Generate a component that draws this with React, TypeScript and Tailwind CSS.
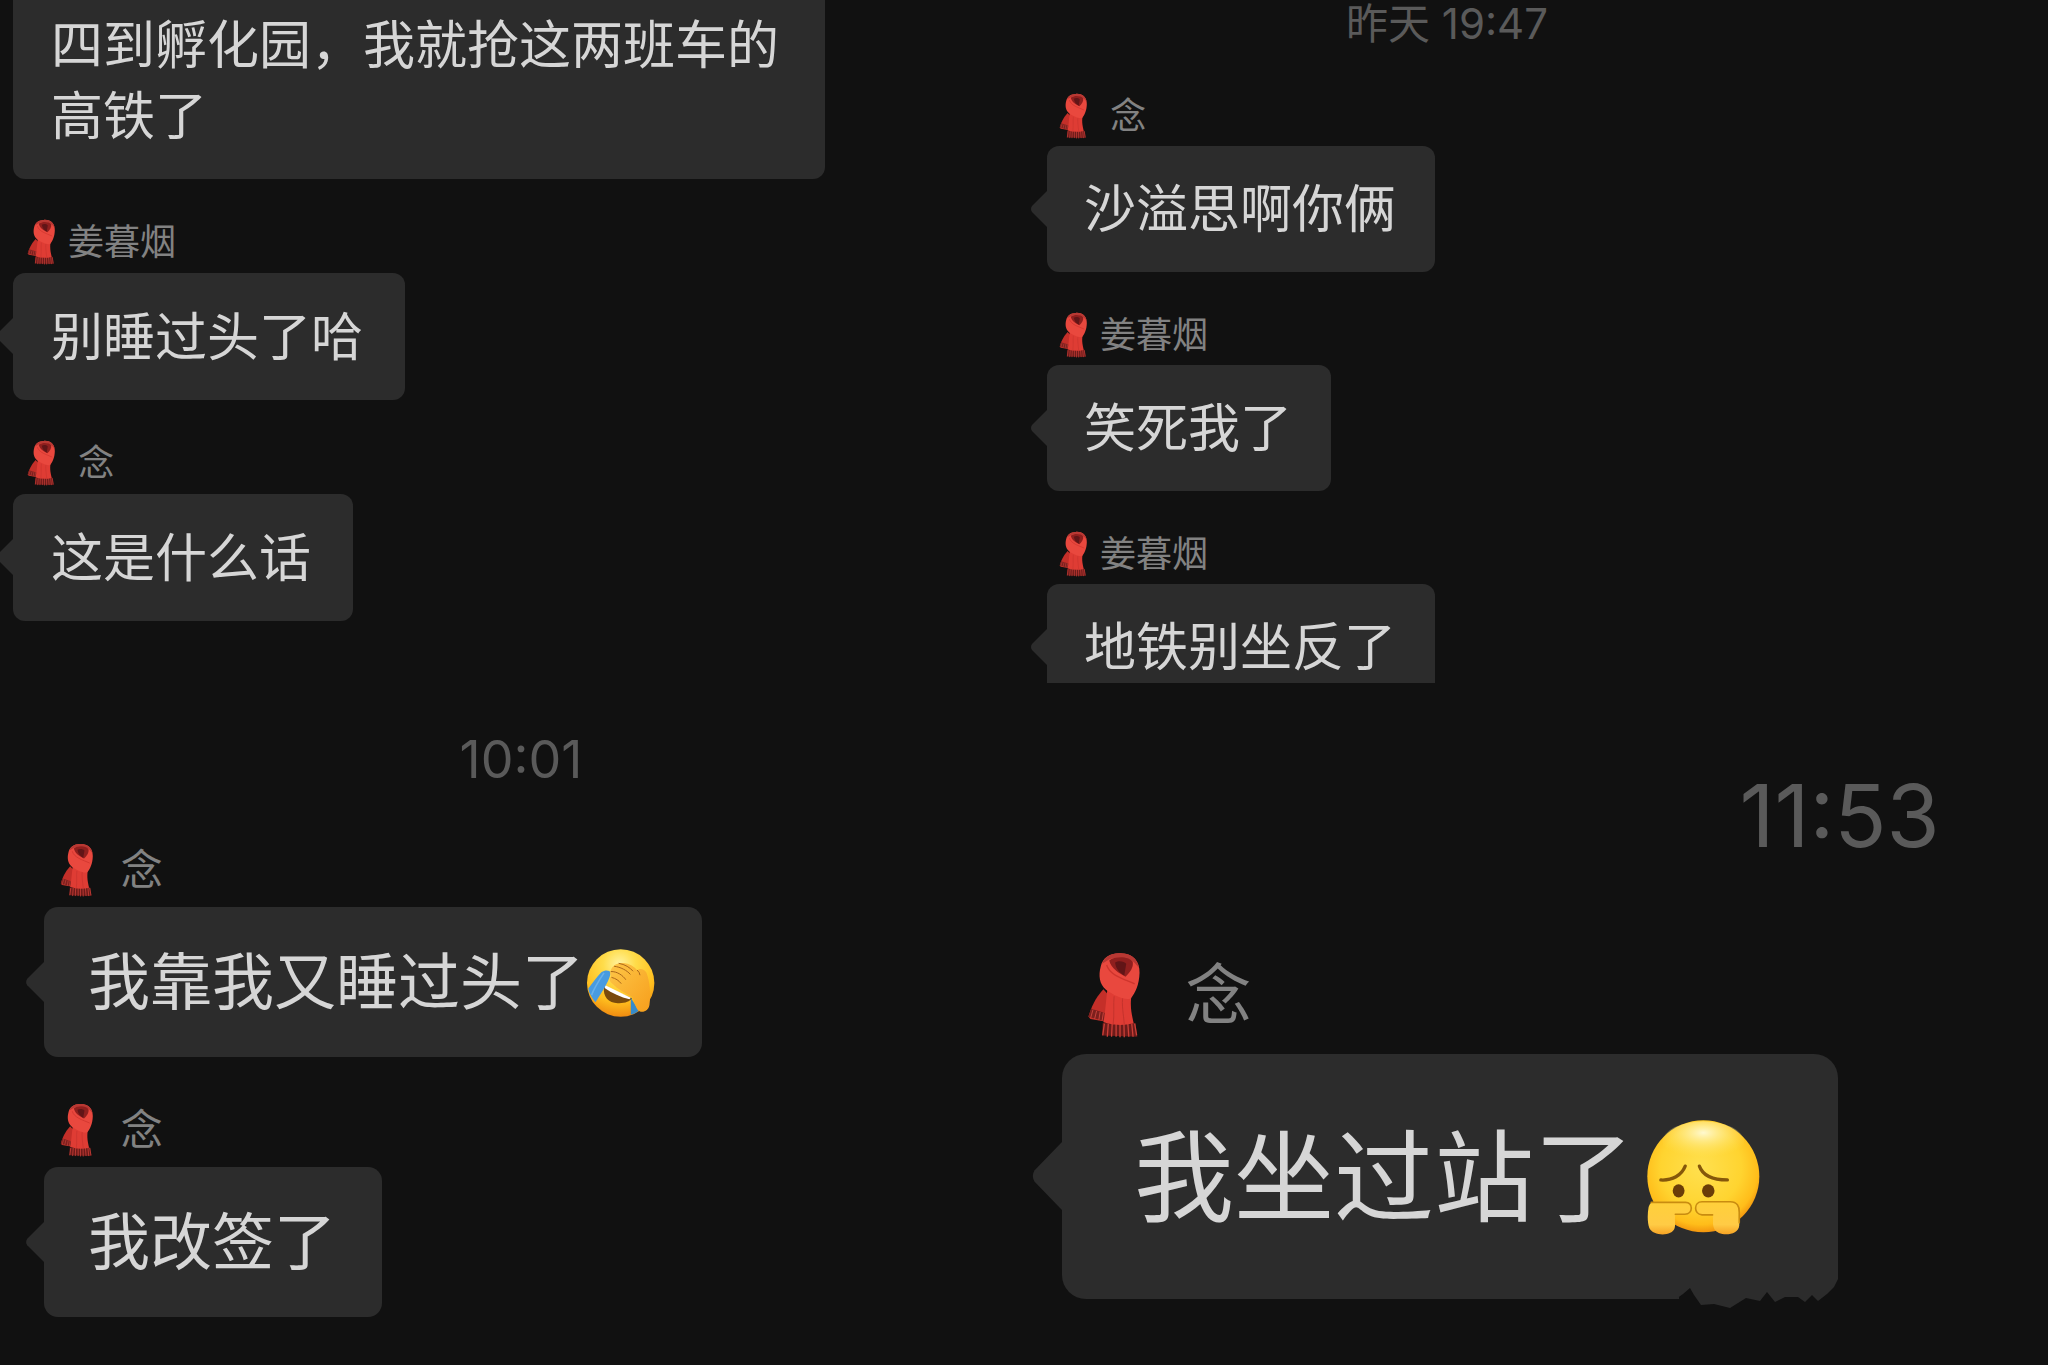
import { ReactNode } from "react";
import clsx from "clsx";

type Size = {
  tail: string;
  bubble: string;
  radius: string;
  header: string;
  scarf: string;
  name: string;
  emoji: string;
};

const small: Size = {
  tail: "w-[17px] h-9 mt-[45px]",
  bubble: "pl-[37px] pr-[39px] pt-[29px] pb-[27px] text-[52px] leading-[70px]",
  radius: "rounded-xl",
  header: "pt-10 pb-[7px] pl-[29px] gap-[13px]",
  scarf: "w-7 h-[46px]",
  name: "text-[36px] leading-[46px]",
  emoji: "size-14",
};

const smallWide: Size = {
  ...small,
  bubble: "pl-[38px] pr-[42px] pt-[29px] pb-[27px] text-[52px] leading-[71px]",
  header: "pt-10 pb-2 pl-[31px] gap-[13px]",
};

const medium: Size = {
  tail: "w-[19px] h-10 mt-[55px]",
  bubble: "pl-11 pr-[46px] pt-[37px] pb-[35px] text-[62px] leading-[78px]",
  radius: "rounded-[14px]",
  header: "pt-[46px] pb-[10px] pl-[35px] gap-4",
  scarf: "w-[33px] h-[54px]",
  name: "text-[42px] leading-[54px]",
  emoji: "size-[70px]",
};

const large: Size = {
  tail: "w-[31px] h-[68px] mt-[88px]",
  bubble: "pl-[72px] pr-[78px] pt-[61px] pb-[59px] text-[100px] leading-[125px]",
  radius: "rounded-[24px]",
  header: "pt-[86px] pb-4 pl-[56px] gap-[27px]",
  scarf: "w-[53px] h-[86px]",
  name: "text-[66px] leading-[86px]",
  emoji: "w-[114px] h-[117px]",
};

const Scarf = ({ className }: { className: string }) => (
  <svg viewBox="50 64 162 264" className={clsx("shrink-0", className)} aria-hidden="true">
    <path d="M100 178 C84 196 68 216 54 262 L60 270 L104 277 L124 205Z" fill="#c42f29" />
    <path d="M62 238 L54 263 L102 276 L108 252Z" fill="#7d1f1d" />
    <path d="M68 241l-7 25M79 245l-6 25M90 248l-4 25M100 250l-4 25" stroke="#c9443c" strokeWidth="3" />
    <path d="M98 282 H198 L204 324 L96 320Z" fill="#6d1b1a" />
    <path
      d="M103 284l-5 36M115 284l-3 40M127 284l-2 40M139 284v40M151 284v42M163 284l1 42M175 284l3 40M187 284l4 40M196 284l6 36"
      stroke="#cb3f37"
      strokeWidth="4"
    />
    <path d="M112 180 C108 212 106 250 100 280 Q145 294 193 283 C188 258 180 235 187 192Z" fill="#df3c34" />
    <path d="M133 200 C130 225 134 255 130 286M160 200 C155 225 162 255 164 286" stroke="#c4322c" strokeWidth="3" fill="none" />
    <path
      d="M148 68 C190 66 212 92 211 128 C210 165 198 190 184 207 C166 214 130 196 108 180 C88 164 84 136 92 108 C98 82 118 69 148 68Z"
      fill="#e9483e"
    />
    <path d="M148 68 C184 66 204 84 209 112 L196 98 C182 80 130 76 110 92 L96 100 C104 78 122 69 148 68Z" fill="#b83833" />
    <path d="M118 90 C135 76 178 76 190 94 C193 112 182 126 168 140 C148 128 124 116 118 90Z" fill="#8f1f1e" />
    <path d="M136 96 C146 90 164 92 170 100 L164 136 C150 128 138 116 136 96Z" fill="#611517" />
    <path d="M110 104 C120 136 160 146 196 162" stroke="#cf352d" strokeWidth="4" fill="none" />
  </svg>
);

const Facepalm = ({ className }: { className: string }) => (
  <svg viewBox="50 48 212 214" className={className} role="img" aria-label="捂脸">
    <defs>
      <radialGradient id="palmFace" cx="48%" cy="22%" r="80%">
        <stop offset="0" stopColor="#fff3a0" />
        <stop offset=".3" stopColor="#ffdc4a" />
        <stop offset=".7" stopColor="#ffbe1e" />
        <stop offset="1" stopColor="#ee8710" />
      </radialGradient>
      <linearGradient id="palmHand" x1="0" y1="0" x2="1" y2="1">
        <stop offset="0" stopColor="#fdc648" />
        <stop offset="1" stopColor="#f79f1c" />
      </linearGradient>
    </defs>
    <circle cx="155" cy="155" r="103" fill="url(#palmFace)" />
    <path d="M104 166 C100 198 118 216 146 217 C168 218 182 212 190 202Z" fill="#7a4a0c" />
    <path d="M108 162 L186 200 L182 205 C156 198 128 186 106 170Z" fill="#fff" />
    <path d="M96 122 C108 114 122 116 124 124 C124 142 100 180 78 214 C66 200 58 186 56 172 C68 156 82 136 96 122Z" fill="#489be0" />
    <path d="M104 124 C92 142 74 170 66 192" stroke="#68b0ea" strokeWidth="5" fill="none" />
    <path d="M186 200 L210 240 C203 246 196 250 186 252Z" fill="#358bcb" />
    <path
      d="M124 118 C130 100 146 93 164 94 C180 96 196 104 206 116 C214 108 228 112 234 124 C244 150 248 190 243 222 C240 238 228 245 214 242 C200 236 200 216 190 198 C170 188 146 174 128 156 C120 148 120 140 126 134 C122 128 122 122 124 118Z"
      fill="url(#palmHand)"
    />
    <path
      d="M126 120 C144 119 162 132 170 144M136 104 C154 106 174 116 184 128M150 95 C168 98 184 108 192 118M128 138 C140 141 150 148 156 156M206 116 q7 6 8 14"
      stroke="#a8651a"
      strokeWidth="3"
      fill="none"
      strokeLinecap="round"
    />
  </svg>
);

const Worried = ({ className }: { className: string }) => (
  <svg viewBox="50 55 346 355" className={className} role="img" aria-label="委屈">
    <defs>
      <radialGradient id="worryFace" cx="48%" cy="42%" r="60%">
        <stop offset="0" stopColor="#ffe04f" />
        <stop offset=".6" stopColor="#ffd430" />
        <stop offset=".85" stopColor="#ffbd1a" />
        <stop offset="1" stopColor="#ef890a" />
      </radialGradient>
      <radialGradient id="worryShine" cx="50%" cy="28%" r="60%">
        <stop offset="0" stopColor="#fffbd8" stopOpacity=".95" />
        <stop offset="1" stopColor="#ffe562" stopOpacity="0" />
      </radialGradient>
      <linearGradient id="worryHand" x1="0" y1="0" x2="0" y2="1">
        <stop offset="0" stopColor="#ffd03a" />
        <stop offset=".7" stopColor="#ffcb45" />
        <stop offset="1" stopColor="#f6a325" />
      </linearGradient>
    </defs>
    <circle cx="224" cy="229" r="170" fill="url(#worryFace)" />
    <ellipse cx="224" cy="124" rx="124" ry="62" fill="url(#worryShine)" />
    <g fill="none" stroke="#85570a" strokeWidth="10" strokeLinecap="round">
      <path d="M95 240 C130 242 158 226 169 198" />
      <path d="M212 198 C222 226 250 240 297 240" />
    </g>
    <ellipse cx="149" cy="273" rx="18" ry="20" fill="#6a3d08" />
    <ellipse cx="239" cy="273" rx="19" ry="20" fill="#6a3d08" />
    <g fill="url(#worryHand)">
      <path d="M76 306 H168 C194 306 194 344 168 344 H139 C136 362 140 376 137 386 C130 412 72 412 60 386 C54 368 54 342 58 322 C62 310 68 306 76 306Z" />
      <path d="M220 306 H306 C326 306 334 320 333 338 V378 C330 412 268 412 257 388 C250 374 256 360 252 346 H220 C194 344 194 306 220 306Z" />
    </g>
    <g fill="none" stroke="#c98c10" strokeWidth="5" strokeLinecap="round">
      <path d="M66 308 H168 C194 306 194 344 168 344 H139" />
      <path d="M252 346 H220 C194 344 194 306 220 306 H306 C326 306 334 320 333 338 V370" />
    </g>
  </svg>
);

const Timestamp = ({ className, children }: { className: string; children: ReactNode }) => (
  <time className={clsx("block whitespace-pre text-center text-[#5a5a5a]", className)}>{children}</time>
);

const Bubble = ({
  size,
  className,
  cut,
  children,
}: {
  size: Size;
  className?: string;
  cut?: "top" | "bottom";
  children: ReactNode;
}) => (
  <div className="flex items-start">
    <svg
      viewBox="0 0 17 36"
      preserveAspectRatio="none"
      className={clsx("shrink-0 text-[#2c2c2c]", size.tail, cut === "top" && "invisible")}
      aria-hidden="true"
    >
      <path d="M17 0 L2 15 Q0 18 2 21 L17 36Z" fill="currentColor" />
    </svg>
    <div
      className={clsx(
        "relative bg-[#2c2c2c] text-[#d6d6d6]",
        size.bubble,
        size.radius,
        cut === "top" && "rounded-t-none !pt-[10px]",
        cut === "bottom" && "rounded-b-none !pb-0",
        className
      )}
    >
      {children}
    </div>
  </div>
);

const Message = ({
  name,
  size,
  cut,
  children,
}: {
  name: string;
  size: Size;
  cut?: "top" | "bottom";
  children: ReactNode;
}) => (
  <article>
    <header className={clsx("flex items-center", size.header)}>
      <Scarf className={size.scarf} />
      <span className={clsx("whitespace-pre text-[#828282]", size.name)}>{name}</span>
    </header>
    <Bubble size={size} cut={cut}>
      {children}
    </Bubble>
  </article>
);

// Torn edge along the lower right corner of the last bubble
const Smudge = () => (
  <svg viewBox="0 0 180 50" className="absolute right-[-18px] bottom-[-26px] h-[50px] w-[180px]" aria-hidden="true">
    <path d="M0 24 H3 V0 H180 V50 H0Z" fill="#111" />
    <path
      d="M0 0 H162 V4 L158 12 L151 19 L142 26 L136 20 L129 27 L122 22 H109 L99 27 L91 17 L84 26 L70 23 L54 33 L38 29 L25 30 L18 20 L14 13 L7 19 L0 24Z"
      fill="#2c2c2c"
    />
  </svg>
);

export default function App() {
  return (
    <main className="grid min-h-screen grid-cols-2 content-start overflow-hidden bg-[#111] font-['Inter','Noto_Sans_CJK_SC',sans-serif]">
      <section className="-ml-1">
        <Bubble size={smallWide} cut="top" className="max-w-[812px]">
          四到孵化园，我就抢这两班车的高铁了
        </Bubble>
        <Message name="姜暮烟" size={smallWide}>
          别睡过头了哈
        </Message>
        <Message name=" 念" size={smallWide}>
          这是什么话
        </Message>
      </section>

      <section className="pl-[6px]">
        <Timestamp className="max-w-[834px] pb-[5px] text-[42px] leading-[48px]">昨天 19:47</Timestamp>
        <Message name=" 念" size={small}>
          沙溢思啊你俩
        </Message>
        <Message name="姜暮烟" size={small}>
          笑死我了
        </Message>
        <Message name="姜暮烟" size={small} cut="bottom">
          地铁别坐反了
        </Message>
      </section>

      <section className="pl-[25px] pt-[47px]">
        <Timestamp className="max-w-[992px] pb-[7px] text-[52px] leading-[60px]">10:01</Timestamp>
        <Message name=" 念" size={medium}>
          <span className="flex items-center gap-0.5">
            我靠我又睡过头了
            <Facepalm className={medium.emoji} />
          </span>
        </Message>
        <Message name=" 念" size={medium}>
          我改签了
        </Message>
      </section>

      <section className="pl-[7px] pt-[83px]">
        <Timestamp className="pl-[600px] text-[86px] leading-[100px]">11:53</Timestamp>
        <Message name=" 念" size={large}>
          <span className="flex items-center gap-3">
            我坐过站了
            <Worried className={large.emoji} />
          </span>
          <Smudge />
        </Message>
      </section>
    </main>
  );
}
